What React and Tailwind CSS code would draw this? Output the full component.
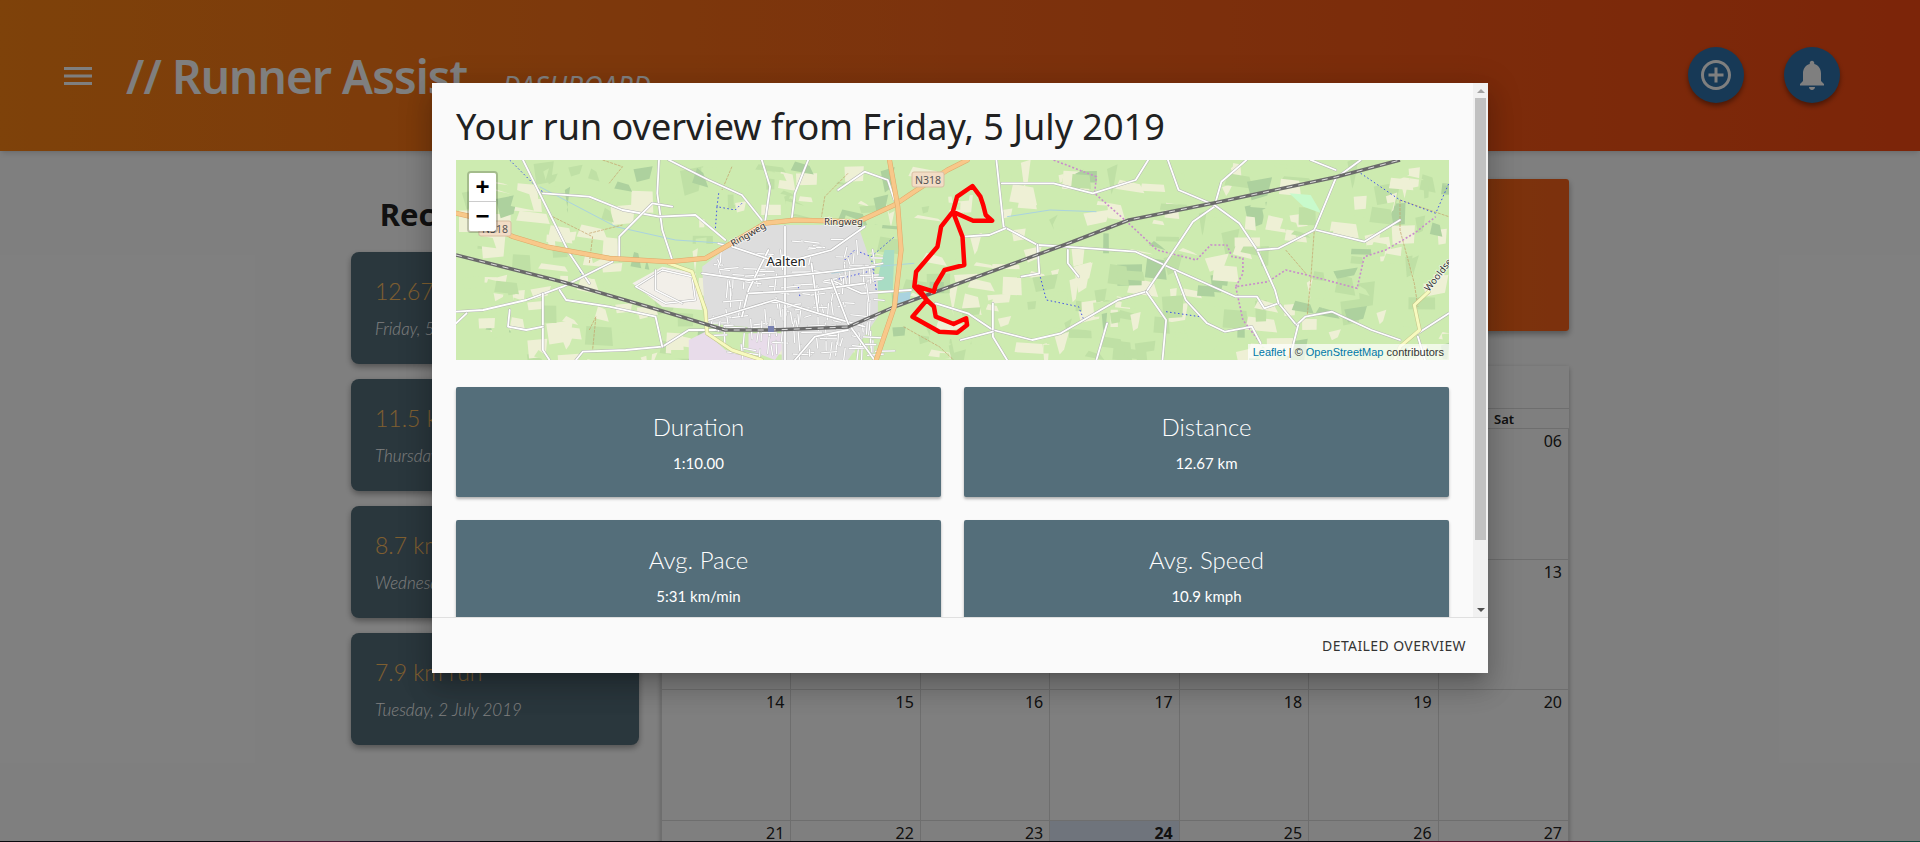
import React from "react";

const runs = [
  { title: "12.67 km run", date: "Friday, 5 July 2019" },
  { title: "11.5 km run", date: "Thursday, 4 July 2019" },
  { title: "8.7 km run", date: "Wednesday, 3 July 2019" },
  { title: "7.9 km run", date: "Tuesday, 2 July 2019" },
];

const stats = [
  { label: "Duration", value: "1:10.00" },
  { label: "Distance", value: "12.67 km" },
  { label: "Avg. Pace", value: "5:31 km/min" },
  { label: "Avg. Speed", value: "10.9 kmph" },
];

const weeks = [
  ["30", "01", "02", "03", "04", "05", "06"],
  ["07", "08", "09", "10", "11", "12", "13"],
  ["14", "15", "16", "17", "18", "19", "20"],
  ["21", "22", "23", "24", "25", "26", "27"],
];

const days = ["Sun", "Mon", "Tue", "Wed", "Thu", "Fri", "Sat"];

// map coordinates were read off two crops, so both get a converter
const a = (pts) => pts.map(([x, y]) => `${(x / 3.015 - 6).toFixed(1)},${(y / 3 - 10).toFixed(1)}`).join(" ");
const b = (pts) => pts.map(([x, y]) => `${(444 + x / 2.8).toFixed(1)},${(y / 3 - 10).toFixed(1)}`).join(" ");

const whiteRoads = [
  a([[630, 30], [625, 130], [640, 240], [670, 330]]),
  a([[220, 30], [290, 170], [360, 310], [420, 400]]),
  a([[18, 485], [100, 480], [230, 450], [340, 410], [490, 335]]),
  a([[660, 30], [780, 90], [880, 135], [940, 210]]),
  a([[940, 30], [965, 110], [950, 215]]),
  a([[280, 130], [420, 140], [520, 180], [630, 200], [740, 195], [830, 270]]),
  a([[510, 330], [510, 260], [560, 210], [610, 160], [670, 170]]),
  a([[1080, 30], [1040, 130], [1030, 210]]),
  a([[1170, 120], [1250, 65], [1320, 90], [1340, 150]]),
  a([[280, 430], [280, 600], [300, 630]]),
  a([[380, 630], [400, 605], [530, 600], [640, 590], [720, 540], [830, 540]]),
  a([[1150, 390], [1240, 430], [1390, 420]]),
  a([[18, 520], [50, 490]]),
  a([[180, 480], [175, 530], [230, 540], [280, 530]]),
  a([[330, 420], [350, 450], [480, 470], [620, 500], [640, 590]]),
  b([[270, 30], [290, 230], [385, 285], [460, 290], [660, 305], [740, 345], [940, 440], [1000, 440], [1020, 475], [1060, 460], [1110, 525]]),
  b([[1110, 525], [1135, 500], [1210, 485], [1320, 540], [1400, 570]]),
  b([[175, 260], [250, 255], [295, 235]]),
  b([[970, 30], [900, 95], [880, 170], [820, 215], [740, 345], [690, 425], [610, 450], [450, 550], [370, 570], [260, 540], [190, 490], [100, 460]]),
  b([[285, 100], [430, 100], [540, 130], [660, 90], [695, 30]]),
  b([[750, 30], [780, 120], [880, 165], [950, 220], [1000, 300], [1050, 420], [1060, 460]]),
  b([[1000, 300], [1060, 295], [1160, 240], [1220, 85], [1290, 30]]),
  b([[1165, 240], [1300, 275], [1400, 210]]),
  b([[690, 425], [745, 510], [735, 630]]),
  b([[770, 365], [800, 450], [860, 520], [910, 545], [985, 530], [1010, 580]]),
  b([[385, 285], [390, 370], [340, 380]]),
  b([[1115, 525], [1090, 630]]),
  b([[1150, 30], [1220, 60]]),
  b([[470, 300], [470, 340], [500, 380]]),
  b([[260, 460], [260, 560], [300, 630]]),
  b([[1450, 550], [1537, 490]]),
  b([[1450, 560], [1470, 630]]),
  b([[580, 520], [550, 630]]),
  b([[170, 570], [260, 545]]),
];

const townStreets = [
  [[1010, 230], [1010, 630]],
  [[880, 500], [900, 420], [960, 300]],
  [[1090, 340], [1110, 490]],
  [[780, 510], [980, 450], [1110, 490], [1250, 530]],
  [[850, 290], [1000, 340], [1150, 300], [1250, 230]],
  [[760, 370], [900, 390], [1100, 370], [1280, 350]],
  [[900, 430], [1100, 420], [1250, 400]],
  [[1150, 390], [1200, 520], [1280, 630]],
  [[1040, 630], [1100, 560], [1200, 540]],
];

const dottedPurple = [
  b([[430, 30], [550, 80], [545, 130], [640, 220], [720, 300], [830, 330], [870, 285], [915, 285], [930, 320], [960, 325], [960, 370], [940, 410], [1030, 395], [1080, 360], [1140, 375], [1280, 415], [1300, 320], [1360, 300], [1440, 250], [1500, 200]]),
  b([[940, 410], [960, 510], [1010, 580]]),
];

const dottedBlue = [
  b([[1290, 70], [1400, 150], [1500, 190], [1537, 100]]),
  b([[390, 370], [410, 450], [500, 470], [515, 510]]),
  b([[745, 485], [840, 500]]),
  a([[810, 130], [805, 170], [860, 180], [880, 160]]),
  a([[805, 170], [800, 240]]),
  a([[1190, 330], [1220, 300], [1270, 320], [1340, 260]]),
  a([[1270, 320], [1285, 420]]),
  a([[1160, 390], [1280, 360]]),
  a([[180, 30], [270, 120], [290, 130]]),
  a([[360, 300], [400, 380]]),
  a([[1050, 410], [1055, 440]]),
];

const boundaries = [
  a([[310, 200], [430, 260], [420, 340]]),
  a([[420, 250], [520, 225]]),
  a([[460, 30], [520, 50], [480, 100]]),
  a([[850, 50], [820, 120]]),
  a([[1200, 70], [1130, 140], [1120, 200]]),
  a([[420, 540], [440, 500], [430, 600]]),
  b([[1400, 150], [1400, 240], [1440, 400], [1450, 470]]),
  b([[1220, 90], [1160, 240], [1150, 390], [1140, 500]]),
  b([[1080, 300], [1140, 375]]),
  b([[1400, 150], [1537, 200]]),
  b([[10, 530], [110, 590], [150, 630]]),
];

// fixed seed so the fields and side streets stay in place on every render
function seeded(start) {
  let seed = start;
  return () => {
    seed = (seed * 1664525 + 1013904223) % 4294967296;
    return seed / 4294967296;
  };
}

function makePatches() {
  const rnd = seeded(2019);
  const list = [];
  for (let i = 0; i < 520; i++) {
    const x = rnd() * 993;
    const y = rnd() * 200;
    const w = 5 + rnd() * 22;
    const h = 4 + rnd() * 18;
    const r = rnd();
    const fill = r < 0.32 ? "#eef0d5" : r < 0.4 ? "#add19e" : r < 0.62 ? "#bfe0a5" : "#cdebb0";
    const s = (rnd() - 0.5) * 10;
    list.push({
      fill,
      points: `${x},${y} ${x + w},${y + s} ${x + w + s},${y + h} ${x - s},${y + h - s}`,
    });
  }
  return list;
}

function makeSideStreets() {
  const rnd = seeded(77);
  const list = [];
  for (let i = 0; i < 170; i++) {
    const x = 252 + rnd() * 168;
    const y = 78 + rnd() * 118;
    const horizontal = rnd() > 0.5;
    const len = 6 + rnd() * 14;
    const skew = (rnd() - 0.5) * 5;
    list.push(`${x},${y} ${horizontal ? x + len : x + skew},${horizontal ? y + skew : y + len}`);
  }
  return list;
}

const patches = makePatches();
const sideStreets = makeSideStreets();

function Poly({ points, casing, color, width }) {
  return (
    <>
      <polyline points={points} fill="none" stroke={casing} strokeWidth={width + 1} strokeLinejoin="round" strokeLinecap="round" />
      <polyline points={points} fill="none" stroke={color} strokeWidth={width} strokeLinejoin="round" strokeLinecap="round" />
    </>
  );
}

function Shield({ x, y }) {
  return (
    <g>
      <rect x={x} y={y} width="32" height="15" rx="2" fill="#f2dcc5" stroke="#d8bea2" />
      <text x={x + 16} y={y + 11.5} textAnchor="middle" fontSize="10.5" fill="#555" fontFamily="Noto Sans, sans-serif">N318</text>
    </g>
  );
}

const railway = "0,95 107,122 193,147 269,170 316,170 392,167 438,147 608,85 673,60 758,43 880,17 944,0";

function RunMap() {
  return (
    <svg viewBox="0 0 993 200" className="block w-full h-full">
      <rect width="993" height="200" fill="#cdebb0" />
      {patches.map((p, i) => (
        <polygon key={i} points={p.points} fill={p.fill} />
      ))}
      <polygon points={a([[840, 290], [950, 225], [1230, 225], [1290, 400], [1290, 500], [1200, 630], [1000, 630], [1000, 540], [770, 520], [760, 350]])} fill="#dddddd" />
      <polygon points={a([[550, 400], [640, 350], [740, 370], [760, 480], [640, 470]])} fill="#f2efe9" />
      <polygon points={a([[720, 570], [770, 545], [830, 600], [950, 630], [720, 630]])} fill="#e8dcea" />
      <polygon points={a([[900, 550], [1000, 550], [1000, 600], [980, 630], [900, 600]])} fill="#e8dcea" />
      <polygon points={a([[1310, 300], [1340, 300], [1335, 420], [1290, 420], [1290, 380]])} fill="#a8dcc4" />
      <polygon points={a([[1340, 430], [1390, 425], [1385, 455], [1345, 460]])} fill="#aad3df" />
      <polygon points={b([[1090, 130], [1150, 135], [1180, 190], [1130, 170]])} fill="#c8facc" />
      <polyline points={b([[300, 200], [420, 180], [550, 185]])} fill="none" stroke="#aad3df" strokeWidth="1" />
      <polyline points={a([[270, 110], [500, 230], [680, 270], [830, 280]])} fill="none" stroke="#aad3df" strokeWidth="1" />
      <polyline points={a([[1150, 370], [1280, 350], [1400, 340]])} fill="none" stroke="#aad3df" strokeWidth="1" />
      {boundaries.map((p, i) => (
        <polyline key={i} points={p} fill="none" stroke="#c4a06a" strokeWidth="0.7" strokeDasharray="3 1" />
      ))}
      {dottedPurple.map((p, i) => (
        <polyline key={i} points={p} fill="none" stroke="#c88ccb" strokeWidth="1.6" strokeDasharray="2 2" />
      ))}
      {dottedBlue.map((p, i) => (
        <polyline key={i} points={p} fill="none" stroke="#3d4dea" strokeWidth="1" strokeDasharray="1.5 2.5" />
      ))}
      {whiteRoads.map((p, i) => (
        <Poly key={i} points={p} casing="#b5b5b5" color="#ffffff" width={1.8} />
      ))}
      {sideStreets.map((p, i) => (
        <Poly key={i} points={p} casing="#c4c4c4" color="#ffffff" width={1.2} />
      ))}
      {townStreets.map((p, i) => (
        <Poly key={i} points={a(p)} casing="#b5b5b5" color="#ffffff" width={1.8} />
      ))}
      <Poly points={a([[560, 410], [640, 360], [730, 380], [740, 450], [650, 460], [560, 410]])} casing="#b5b5b5" color="#ffffff" width={1.4} />
      <Poly points={a([[620, 360], [620, 420], [700, 460]])} casing="#b5b5b5" color="#ffffff" width={1.4} />
      <Poly points={a([[660, 340], [730, 365], [770, 480], [775, 550], [850, 600], [940, 630]])} casing="#c4c488" color="#f7fabf" width={3} />
      <Poly points={b([[1480, 425], [1440, 465], [1455, 540], [1400, 590], [1385, 630]])} casing="#c4c488" color="#f7fabf" width={3} />
      <polyline points={railway} fill="none" stroke="#6a6a6a" strokeWidth="3.5" strokeLinejoin="round" />
      <polyline points={railway} fill="none" stroke="#ffffff" strokeWidth="0.8" strokeDasharray="6 6" />
      <Poly points={a([[18, 190], [85, 205], [190, 260], [290, 290], [480, 325], [660, 335], [770, 325], [840, 285], [950, 220], [1040, 210], [1230, 215], [1340, 165], [1400, 125], [1500, 60], [1560, 30]])} casing="#dfa868" color="#f8c88a" width={4} />
      <Poly points={a([[1325, 30], [1350, 170], [1360, 300], [1340, 470], [1285, 630]])} casing="#dfa868" color="#f8c88a" width={4} />
      <rect x="312" y="166" width="6" height="6" fill="#7981b0" />
      <text x="330" y="106" textAnchor="middle" fontSize="13" fill="#222" stroke="#ffffff" strokeWidth="2.5" paintOrder="stroke" fontFamily="Noto Sans, sans-serif">Aalten</text>
      <text x="0" y="0" transform="translate(277,87) rotate(-30)" fontSize="9.5" fill="#333" stroke="#ffffff" strokeOpacity="0.7" strokeWidth="1.5" paintOrder="stroke" fontFamily="Noto Sans, sans-serif">Ringweg</text>
      <text x="368" y="65" fontSize="9.5" fill="#333" stroke="#ffffff" strokeOpacity="0.7" strokeWidth="1.5" paintOrder="stroke" fontFamily="Noto Sans, sans-serif">Ringweg</text>
      <text x="0" y="0" transform="translate(973,132) rotate(-52)" fontSize="9.5" fill="#333" stroke="#ffffff" strokeOpacity="0.7" strokeWidth="1.5" paintOrder="stroke" fontFamily="Noto Sans, sans-serif">Wooldse</text>
      <Shield x={23} y={61} />
      <Shield x={456} y={12} />
      <polyline
        points={b([[148, 185], [160, 140], [203, 108], [225, 140], [233, 165], [240, 195], [258, 212], [205, 212], [148, 185], [115, 230], [105, 290], [45, 365], [40, 410], [75, 450], [95, 470], [100, 500], [150, 522], [185, 505], [188, 525], [160, 548], [110, 545], [35, 500], [75, 450], [50, 410], [95, 425], [100, 405], [125, 360], [180, 345], [175, 260], [148, 185]])}
        fill="none"
        stroke="#ff0000"
        strokeWidth="4.5"
        strokeLinejoin="round"
        strokeLinecap="round"
      />
    </svg>
  );
}

function Page() {
  return (
    <div className="h-[841px] overflow-hidden bg-white">
      <header className="h-[151px] flex items-center bg-gradient-to-r from-[#fc8414] via-[#f9651a] to-[#f84a12] text-white shadow-md">
        <svg viewBox="0 0 28 18" className="ml-[64px] w-[28px] h-[18px]" fill="currentColor">
          <rect width="28" height="3" />
          <rect y="7.5" width="28" height="3" />
          <rect y="15" width="28" height="3" />
        </svg>
        <h1 className="ml-[34px] text-[46px] font-semibold tracking-[-0.9px] leading-none">// Runner Assist</h1>
        <span className="ml-[35px] mt-[22px] text-[27px] italic">DASHBOARD</span>
        <div className="ml-auto mr-[80px] -mt-[2px] flex gap-[40px]">
          <button className="w-[56px] h-[56px] rounded-full bg-[#2f73ad] flex items-center justify-center shadow-[0_3px_5px_rgba(0,0,0,0.4)]">
            <svg viewBox="0 0 24 24" className="w-[36px] h-[36px]" fill="currentColor">
              <path d="M13 7h-2v4H7v2h4v4h2v-4h4v-2h-4V7zm-1-5C6.48 2 2 6.48 2 12s4.48 10 10 10 10-4.48 10-10S17.52 2 12 2zm0 18c-4.41 0-8-3.59-8-8s3.59-8 8-8 8 3.59 8 8-3.59 8-8 8z" />
            </svg>
          </button>
          <button className="w-[56px] h-[56px] rounded-full bg-[#2f73ad] flex items-center justify-center shadow-[0_3px_5px_rgba(0,0,0,0.4)]">
            <svg viewBox="0 0 24 24" className="w-[36px] h-[36px]" fill="currentColor">
              <path d="M12 22c1.1 0 2-.9 2-2h-4c0 1.1.89 2 2 2zm6-6v-5c0-3.07-1.64-5.64-4.5-6.32V4c0-.83-.67-1.5-1.5-1.5s-1.5.67-1.5 1.5v.68C7.63 5.36 6 7.92 6 11v5l-2 2v1h16v-1l-2-2z" />
            </svg>
          </button>
        </div>
      </header>

      <main className="flex pl-[351px] pt-[28px] gap-[22px]">
        <aside className="w-[288px]">
          <h2 className="mt-[12px] mb-[15px] text-[31px] font-bold leading-[46px] text-[#222] text-center whitespace-nowrap">Recent activity</h2>
          <div className="flex flex-col gap-[15px]">
            {runs.map((run) => (
              <div key={run.title} className="h-[112px] rounded-[8px] bg-[#546e7a] px-[24px] pt-[21px] font-['Lato',sans-serif] shadow-[0_3px_6px_rgba(0,0,0,0.35)]">
                <div className="text-[23px] font-light leading-[36px] text-[#ffbf60]">{run.title}</div>
                <div className="mt-[2px] text-[17px] font-light italic leading-[36px] text-white">{run.date}</div>
              </div>
            ))}
          </div>
        </aside>

        <section className="w-[908px]">
          <div className="h-[152px] rounded-[3px] bg-gradient-to-r from-[#ff8c10] to-[#f8621a] shadow-[0_3px_6px_rgba(0,0,0,0.35)]" />
          <div className="mt-[35px] bg-white shadow-[0_2px_5px_rgba(0,0,0,0.3)]">
            <div className="h-[42px]" />
            <div className="grid grid-cols-7 h-[21px] border-y border-[#dddddd]">
              {days.map((d) => (
                <div key={d} className="text-center text-[13px] font-semibold leading-[20px] text-[#222] border-r border-[#dddddd] last:border-r-0">{d}</div>
              ))}
            </div>
            {weeks.map((week) => (
              <div key={week[0]} className="grid grid-cols-7 h-[130.5px] border-b border-x border-[#dddddd]">
                {week.map((day) => (
                  <div key={day} className={`border-r border-[#dddddd] last:border-r-0 pr-[6px] text-right text-[16px] leading-[24px] text-[#222] ${day === "24" ? "bg-[#dee9f8] font-bold" : ""}`}>
                    {day}
                  </div>
                ))}
              </div>
            ))}
          </div>
        </section>
      </main>
    </div>
  );
}

function Scrollbar() {
  return (
    <div className="w-[15px] flex flex-col bg-[#f1f1f1]">
      <div className="h-[15px] flex items-center justify-center">
        <div className="w-0 h-0 border-x-[4px] border-b-[4px] border-x-transparent border-b-[#a3a3a3]" />
      </div>
      <div className="ml-[2px] w-[11px] h-[442px] bg-[#c1c1c1]" />
      <div className="flex-1" />
      <div className="h-[15px] flex items-center justify-center">
        <div className="w-0 h-0 border-x-[4px] border-t-[4px] border-x-transparent border-t-[#505050]" />
      </div>
    </div>
  );
}

function RunModal() {
  return (
    <div className="absolute left-[432px] top-[83px] w-[1056px] h-[590px] flex flex-col bg-[#fafafa] shadow-[0_16px_24px_2px_rgba(0,0,0,0.14),0_6px_30px_5px_rgba(0,0,0,0.12),0_8px_10px_-7px_rgba(0,0,0,0.2)]">
      <div className="h-[534px] flex">
        <div className="flex-1 overflow-hidden px-[24px] pt-[20px]">
          <h4 className="text-[36px] leading-[47px] text-[#212121] whitespace-nowrap">Your run overview from Friday, 5 July 2019</h4>
          <div className="relative mt-[10px] h-[200px]">
            <RunMap />
            <div className="absolute left-[11px] top-[11px] w-[31px] rounded-[4px] border-2 border-black/20 bg-clip-padding font-['Liberation_Sans',sans-serif] text-black">
              <div className="h-[29px] bg-white rounded-t-[2px] border-b border-[#cccccc] text-center text-[24px] font-bold leading-[27px]">+</div>
              <div className="h-[29px] bg-white rounded-b-[2px] text-center text-[24px] font-bold leading-[27px]">−</div>
            </div>
            <div className="absolute right-0 bottom-0 h-[16px] px-[5px] bg-white/70 font-['Liberation_Sans',sans-serif] text-[11px] leading-[16px] text-[#333333]">
              <span className="text-[#0078a8]">Leaflet</span> | © <span className="text-[#0078a8]">OpenStreetMap</span> contributors
            </div>
          </div>
          <div className="mt-[27px] grid grid-cols-2 gap-x-[23px] gap-y-[23px] font-['Lato',sans-serif]">
            {stats.map((s) => (
              <div key={s.label} className="h-[110px] rounded-[2px] bg-[#546e7a] text-center text-white shadow-[0_2px_3px_rgba(0,0,0,0.3)]">
                <div className="pt-[23px] text-[24px] font-light leading-[34px]">{s.label}</div>
                <div className="mt-[7px] text-[15px] leading-[24px]">{s.value}</div>
              </div>
            ))}
          </div>
        </div>
        <Scrollbar />
      </div>
      <div className="h-[56px] border-t border-black/10 flex items-center justify-end pr-[22px]">
        <span className="text-[14px] uppercase tracking-[0.4px] text-[#343434]">Detailed overview</span>
      </div>
    </div>
  );
}

export default function App() {
  return (
    <div className="relative h-[842px] w-[1920px] overflow-hidden font-['Noto_Sans','Open_Sans',sans-serif]">
      <Page />
      <div className="h-[1px] flex bg-[#15151f]">
        <div className="w-[250px]" />
        <div className="w-[100px] bg-[#8a3a6a]" />
        <div className="w-[130px] bg-[#3a2a4a]" />
        <div className="w-[940px]" />
        <div className="w-[170px] bg-[#a0305a]" />
        <div className="w-[330px] bg-[#2a8a78]" />
      </div>
      <div className="absolute inset-0 bg-black/50" />
      <RunModal />
    </div>
  );
}
